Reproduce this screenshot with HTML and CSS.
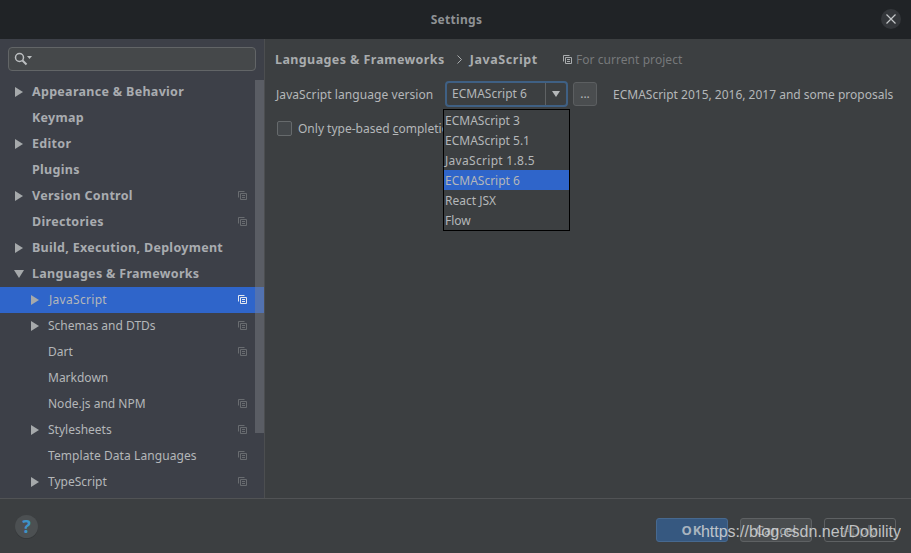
FILE: index.html
```html
<!DOCTYPE html>
<html lang="en">
<head>
    <meta charset="UTF-8">
    <meta name="viewport" content="width=device-width, initial-scale=1.0">
    <title>Settings</title>
    <link rel="stylesheet" href="styles.css">
</head>
<body>
    <svg class="defs" width="0" height="0">
        <symbol id="copy" viewBox="0 0 9 9">
            <path d="M0.5 6.5V0.5H6.5M2.5 2.5H8.5V8.5H2.5ZM4 4.5H7M4 6.5H7" fill="none" stroke="currentColor"/>
        </symbol>
    </svg>
    <div class="window">
        <header class="titlebar">
            <span class="title">Settings</span>
            <button class="close" type="button">
                <svg width="10" height="10" viewBox="0 0 10 10"><path d="M0.5 0.5L9.5 9.5M9.5 0.5L0.5 9.5" stroke="#c4c7c9" stroke-width="1.2"/></svg>
            </button>
        </header>

        <div class="main">
            <aside class="sidebar">
                <div class="search">
                    <svg width="18" height="14" viewBox="0 0 18 14"><circle cx="5.5" cy="5.5" r="4" fill="none" stroke="#bcbfc1" stroke-width="1.5"/><path d="M8.5 8.5L12.5 12.5" stroke="#bcbfc1" stroke-width="2"/><path d="M13 4H18L15.500 7Z" fill="#bcbfc1"/></svg>
                </div>
                <div class="tree-wrap">
                    <ul class="tree">
                        <li class="row top"><i class="arrow"></i><span>Appearance &amp; Behavior</span></li>
                        <li class="row top"><i class="noarrow"></i><span>Keymap</span></li>
                        <li class="row top"><i class="arrow"></i><span>Editor</span></li>
                        <li class="row top"><i class="noarrow"></i><span>Plugins</span></li>
                        <li class="row top"><i class="arrow"></i><span>Version Control</span><svg class="copy"><use href="#copy"/></svg></li>
                        <li class="row top"><i class="noarrow"></i><span>Directories</span><svg class="copy"><use href="#copy"/></svg></li>
                        <li class="row top"><i class="arrow"></i><span>Build, Execution, Deployment</span></li>
                        <li class="row top"><i class="arrow open"></i><span>Languages &amp; Frameworks</span></li>
                        <li class="row sub selected"><i class="arrow"></i><span class="wide">JavaScript</span><svg class="copy"><use href="#copy"/></svg></li>
                        <li class="row sub"><i class="arrow"></i><span>Schemas and DTDs</span><svg class="copy"><use href="#copy"/></svg></li>
                        <li class="row sub"><i class="noarrow"></i><span>Dart</span><svg class="copy"><use href="#copy"/></svg></li>
                        <li class="row sub"><i class="noarrow"></i><span>Markdown</span></li>
                        <li class="row sub"><i class="noarrow"></i><span>Node.js and NPM</span><svg class="copy"><use href="#copy"/></svg></li>
                        <li class="row sub"><i class="arrow"></i><span>Stylesheets</span><svg class="copy"><use href="#copy"/></svg></li>
                        <li class="row sub"><i class="noarrow"></i><span class="tight-wide">Template Data Languages</span><svg class="copy"><use href="#copy"/></svg></li>
                        <li class="row sub"><i class="arrow"></i><span>TypeScript</span><svg class="copy"><use href="#copy"/></svg></li>
                    </ul>
                    <div class="scrollbar"></div>
                </div>
            </aside>

            <section class="content">
                <div class="crumbs">
                    <span class="crumb">Languages &amp; Frameworks</span>
                    <svg class="chevron" width="5" height="9" viewBox="0 0 5 9"><path d="M0.500 0.500L4.500 4.500L0.500 8.500" fill="none" stroke="#a9acae"/></svg>
                    <span class="crumb current">JavaScript</span>
                    <svg class="project-icon" width="9" height="9"><use href="#copy"/></svg>
                    <span class="project">For current project</span>
                </div>

                <div class="version-row">
                    <span class="version-label">JavaScript language version</span>
                    <div class="combo">
                        <span class="combo-value">ECMAScript 6</span>
                        <span class="combo-btn"><i class="combo-arrow"></i></span>
                        <ul class="menu">
                            <li>ECMAScript 3</li>
                            <li>ECMAScript 5.1</li>
                            <li class="wide">JavaScript 1.8.5</li>
                            <li class="active">ECMAScript 6</li>
                            <li>React JSX</li>
                            <li>Flow</li>
                        </ul>
                    </div>
                    <button class="dots" type="button">...</button>
                    <span class="version-note">ECMAScript 2015, 2016, 2017 and some proposals</span>
                </div>

                <div class="check-row">
                    <span class="checkbox"></span>
                    <span class="check-label">Only type-based <u>c</u>ompletion</span>
                </div>
            </section>
        </div>

        <footer class="footer">
            <span class="help">?</span>
            <div class="actions">
                <button class="btn primary" type="button">OK</button>
                <button class="btn" type="button">Cancel</button>
                <button class="btn ghost" type="button">Apply</button>
            </div>
        </footer>
    </div>
    <div class="watermark">https://blog.csdn.net/Dobility</div>
</body>
</html>
```

FILE: styles.css
```css
* {
    box-sizing: border-box;
}
html, body {
    height: 100%;
}
body {
    margin: 0;
    background-color: #3c3f41;
    color: #b4b7b9;
    font-family: "Noto Sans", Arial, sans-serif;
    font-size: 12px;
    overflow: hidden;
    position: relative;
}
ul {
    list-style: none;
    margin: 0;
    padding: 0;
}
button {
    font-family: inherit;
    padding: 0;
}
.defs {
    position: absolute;
}
.window {
    display: flex;
    flex-direction: column;
    height: 553px;
}
.titlebar {
    height: 39px;
    flex: none;
    background-color: #202326;
    display: flex;
    align-items: center;
    justify-content: center;
    position: relative;
}
.title {
    font-weight: 700;
    font-size: 12px;
    color: #8f9295;
    letter-spacing: 0.3px;
    margin-left: 2px;
}
.close {
    position: absolute;
    right: 10px;
    top: 9px;
    width: 20px;
    height: 20px;
    border: none;
    border-radius: 50%;
    background-color: #34373b;
    display: flex;
    align-items: center;
    justify-content: center;
}
.main {
    display: flex;
    height: 459px;
    flex: none;
}
.sidebar {
    width: 265px;
    flex: none;
    background-color: #3d4048;
    border-right: 1px solid #4c4e50;
    padding-top: 8px;
}
.search {
    margin: 0 8px;
    height: 24px;
    width: 248px;
    background-color: #45484a;
    border: 1px solid #626567;
    border-radius: 4px;
    padding: 4px 0 0 5px;
}
.search svg {
    display: block;
}
.tree-wrap {
    position: relative;
    margin-top: 7px;
}
.tree {
    padding-top: 1px;
}
.row {
    height: 26px;
    display: flex;
    align-items: center;
    position: relative;
}
.row > span {
    margin-top: -1px;
}
.row.top {
    font-size: 12.5px;
    font-weight: 700;
    letter-spacing: 0.3px;
    color: #a9acb0;
    padding-left: 15px;
}
.row.sub {
    padding-left: 31px;
}
.row .wide {
    margin-left: 1px;
}
.wide {
    letter-spacing: 0.3px;
}
.tight-wide {
    letter-spacing: 0.08px;
}
.arrow {
    width: 0;
    height: 0;
    flex: none;
    border-left: 8px solid #a6a9ab;
    border-top: 5px solid transparent;
    border-bottom: 5px solid transparent;
    margin-right: 9px;
}
.arrow.open {
    border-left: 5px solid transparent;
    border-right: 5px solid transparent;
    border-top: 8px solid #a6a9ab;
    border-bottom: none;
    margin-left: -1px;
    margin-right: 8px;
}
.noarrow {
    width: 8px;
    flex: none;
    margin-right: 9px;
}
.copy {
    position: absolute;
    left: 238px;
    top: 8px;
    width: 9px;
    height: 9px;
    color: #696c70;
}
.selected {
    background-color: #2f65ca;
    width: 264px;
}
.selected .copy {
    color: #e4e8f0;
}
.scrollbar {
    position: absolute;
    left: 255px;
    top: 2px;
    width: 9px;
    height: 353px;
    background-color: rgba(130, 133, 140, 0.42);
}
.content {
    flex: 1;
    min-width: 0;
    padding: 11px 0 0 10px;
}
.crumbs {
    display: flex;
    align-items: center;
    height: 18px;
}
.crumb {
    font-size: 12.5px;
    font-weight: 700;
    letter-spacing: 0.4px;
    color: #a9acae;
}
.crumb.current {
    letter-spacing: 0.6px;
}
.chevron {
    margin: 0 8px 0 12px;
}
.project-icon {
    margin-left: 25px;
    color: #a9acae;
}
.project {
    margin-left: 4px;
    color: #77797b;
    letter-spacing: 0.06px;
}
.version-row {
    display: flex;
    align-items: center;
    margin-top: 13px;
    height: 26px;
}
.version-label {
    width: 170px;
    flex: none;
    padding-left: 1px;
    letter-spacing: 0.07px;
}
.combo {
    width: 123px;
    height: 26px;
    flex: none;
    border: 2px solid #3f6084;
    border-radius: 4px;
    background-color: #3c3f41;
    display: flex;
    position: relative;
}
.combo-value {
    flex: 1;
    padding-left: 5px;
    line-height: 22px;
}
.combo-btn {
    width: 21px;
    border-left: 1px solid #5f6264;
    display: flex;
    align-items: center;
    justify-content: center;
}
.combo-arrow {
    width: 0;
    height: 0;
    border-left: 4.5px solid transparent;
    border-right: 4.5px solid transparent;
    border-top: 6px solid #b4b7b9;
}
.menu {
    position: absolute;
    left: -4px;
    top: 26px;
    width: 127px;
    height: 122px;
    background-color: #3c3f41;
    border: 1px solid #000;
    z-index: 2;
}
.menu li {
    height: 20px;
    line-height: 21px;
    padding-left: 1px;
}
.menu li.active {
    background-color: #2f65ca;
}
.dots {
    width: 24px;
    height: 24px;
    margin-left: 5px;
    flex: none;
    background-color: #4a4d4f;
    border: 1px solid #5c5f61;
    border-radius: 3px;
    color: #b4b7b9;
    font-size: 12px;
    line-height: 18px;
}
.version-note {
    margin-left: 16px;
    white-space: nowrap;
}
.check-row {
    display: flex;
    align-items: center;
    margin-top: 11px;
    height: 20px;
}
.checkbox {
    width: 15px;
    height: 15px;
    margin-left: 2px;
    background-color: #43474a;
    border: 1px solid #666a6c;
    border-radius: 2px;
    flex: none;
}
.check-label {
    margin-left: 6px;
    white-space: nowrap;
}
.footer {
    flex: 1;
    border-top: 1px solid #515355;
    display: flex;
    justify-content: space-between;
    padding: 19px 15px 0 15px;
}
.help {
    width: 23px;
    height: 23px;
    margin-top: -3px;
    border-radius: 50%;
    background-color: #4c5052;
    box-shadow: 0 1px 0 #35383a;
    color: #3e93c8;
    font-weight: 700;
    font-size: 18px;
    line-height: 23px;
    text-align: center;
}
.actions {
    display: flex;
    gap: 12px;
}
.btn {
    width: 72px;
    height: 24px;
    background-color: #4a4d4f;
    border: 1px solid #5e6163;
    border-radius: 3px;
    color: #a3a6a8;
    font-size: 13px;
}
.btn.primary {
    background-color: #365880;
    border-color: #47698f;
    font-weight: 700;
    color: #a9b4bf;
    letter-spacing: 1px;
}
.btn.ghost {
    background-color: #3c3f41;
    color: #6d7072;
}
.watermark {
    position: absolute;
    right: 10px;
    top: 523px;
    font-family: "Liberation Sans", Arial, sans-serif;
    font-size: 16px;
    color: #d6d8d9;
    opacity: 0.85;
    z-index: 3;
}
```
